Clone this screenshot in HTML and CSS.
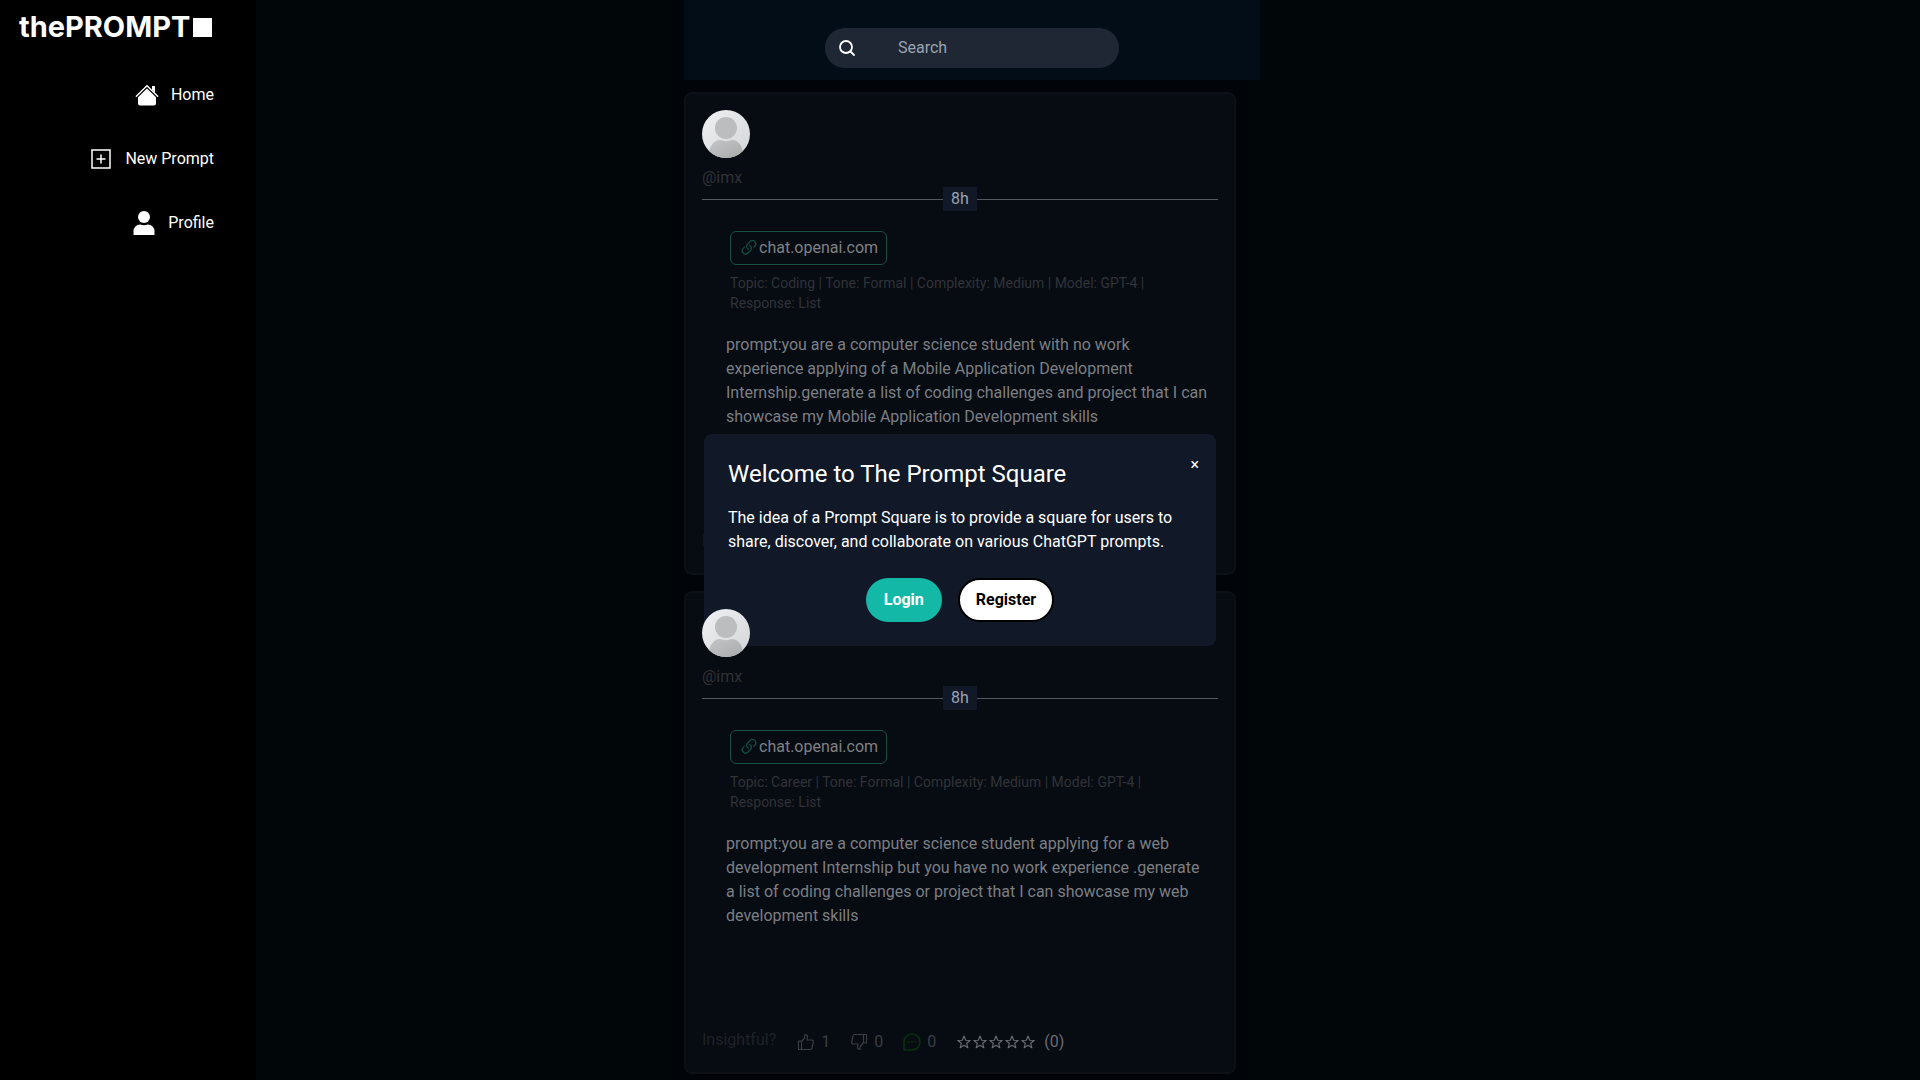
FILE: index.html
```html
<!DOCTYPE html>
<html lang="en">
<head>
    <meta charset="UTF-8">
    <meta name="viewport" content="width=device-width, initial-scale=1.0">
    <title>The Prompt Square</title>
    <link rel="stylesheet" href="styles.css">
</head>
<body>
    <!-- shared icons -->
    <svg class="sprite" aria-hidden="true">
        <defs>
            <linearGradient id="avatar-bg" x1="0" y1="0" x2="1" y2="1">
                <stop offset="0" stop-color="#f0f1f3"/>
                <stop offset="1" stop-color="#d3d5d8"/>
            </linearGradient>
            <linearGradient id="avatar-body" x1="0" y1="0" x2="1" y2="1">
                <stop offset="0" stop-color="#c4c5c7"/>
                <stop offset="1" stop-color="#a9aaac"/>
            </linearGradient>
            <clipPath id="avatar-clip"><circle cx="24" cy="24" r="24"/></clipPath>
        </defs>
        <symbol id="avatar" viewBox="0 0 48 48">
            <g clip-path="url(#avatar-clip)">
                <rect width="48" height="48" fill="url(#avatar-bg)"/>
                <circle cx="24" cy="18" r="11" fill="#bcbdbf"/>
                <path d="M7 42c1-6 5-12 11-12 4 1.500 8 1.500 12 0 6 0 10 6 11 12v6H7z" fill="url(#avatar-body)"/>
            </g>
        </symbol>
        <symbol id="link" viewBox="2 2 12 12">
            <path fill="currentColor" d="M4.715 6.542 3.343 7.914a3 3 0 1 0 4.243 4.243l1.828-1.829A3 3 0 0 0 8.586 5.500L8 6.086a1 1 0 0 0-.154.199 2 2 0 0 1 .861 3.337L6.880 11.450a2 2 0 1 1-2.830-2.830l.793-.792a4 4 0 0 1-.128-1.287z"/>
            <path fill="currentColor" d="M6.586 4.672A3 3 0 0 0 7.414 9.500l.775-.776a2 2 0 0 1-.896-3.346L9.120 3.550a2 2 0 1 1 2.830 2.830l-.793.792c.112.420.155.855.128 1.287l1.372-1.372a3 3 0 1 0-4.243-4.243z"/>
        </symbol>
        <symbol id="thumb" viewBox="0 0 18 18">
            <path d="M1.500 8h3v8.500h-3zM4.500 8.500l3-3.500.6-3.500c1.800 0 2.600 1.300 2.300 3L10 7h4.800c1 0 1.700.8 1.500 1.700l-1.200 6.200c-.2 1-.8 1.600-1.800 1.600H4.500" fill="none" stroke="currentColor" stroke-width="1.200" stroke-linejoin="round"/>
        </symbol>
        <symbol id="comment" viewBox="0 0 18 18">
            <path d="M1 17V9a8 8 0 1 1 8 8z" fill="none" stroke="currentColor" stroke-width="1.600" stroke-linejoin="round"/>
            <circle cx="5.500" cy="9" r="1" fill="currentColor"/>
            <circle cx="9" cy="9" r="1" fill="currentColor"/>
            <circle cx="12.500" cy="9" r="1" fill="currentColor"/>
        </symbol>
        <symbol id="star" viewBox="0 0 16 16">
            <path d="M8 2l1.700 4.300 4.500.2-3.500 2.800 1.200 4.500L8 11.300l-3.900 2.500 1.200-4.500-3.500-2.800 4.500-.2z" fill="none" stroke="currentColor" stroke-width="1.100" stroke-linejoin="round"/>
        </symbol>
    </svg>

    <aside class="sidebar">
        <a class="logo" href="#">thePROMPT<span class="logo-square"></span></a>
        <nav class="menu">
            <a href="#">
                <svg width="24" height="24" viewBox="0 0 24 24" fill="currentColor">
                    <path d="M12 5.500l9 8.700V20.500a2 2 0 0 1-2 2H5a2 2 0 0 1-2-2v-6.300z"/>
                    <path d="M1.300 13.200L12 2.700l10.700 10.500" fill="none" stroke="currentColor" stroke-width="1.400" stroke-linecap="round"/>
                    <path d="M17 3h3v6.500l-3-3z"/>
                </svg>
                Home
            </a>
            <a href="#">
                <svg width="24" height="24" viewBox="0 0 24 24" fill="none" stroke="currentColor" stroke-width="1.500">
                    <path d="M3 3h18v18H3zM12 7.500v9M7.500 12h9"/>
                </svg>
                New Prompt
            </a>
            <a href="#">
                <svg width="24" height="24" viewBox="0 0 24 24" fill="currentColor">
                    <circle cx="12" cy="6" r="6"/>
                    <path d="M1.500 24v-4a6.500 6.500 0 0 1 6.500-6.500c2.500 1 5.500 1 8 0a6.500 6.500 0 0 1 6.500 6.500v4z"/>
                </svg>
                Profile
            </a>
        </nav>
    </aside>

    <main class="feed">
        <header class="topbar">
            <form class="search">
                <label for="search">
                    <svg width="18" height="18" viewBox="0 0 18 18" fill="none" stroke="currentColor" stroke-width="1.800" stroke-linecap="round">
                        <circle cx="8" cy="8" r="6"/>
                        <path d="M12.500 12.500L16 16"/>
                    </svg>
                </label>
                <input type="text" id="search" placeholder="Search" aria-label="Search">
            </form>
        </header>

        <article class="card">
            <svg class="avatar"><use href="#avatar"/></svg>
            <p class="username">@imx</p>
            <div class="divider"><span>8h</span></div>
            <a class="source" href="#"><svg><use href="#link"/></svg>chat.openai.com</a>
            <p class="tags">Topic: Coding | Tone: Formal | Complexity: Medium | Model: GPT-4 | Response: List</p>
            <p class="prompt">prompt:you are a computer science student with no work experience applying of a Mobile Application Development Internship.generate a list of coding challenges and project that I can showcase my Mobile Application Development skills</p>
            <div class="actions">
                <span class="insightful">Insightful?</span>
                <button class="vote"><svg><use href="#thumb"/></svg>1</button>
                <button class="vote down"><svg><use href="#thumb"/></svg>0</button>
                <button class="vote comments"><svg><use href="#comment"/></svg>0</button>
                <div class="rating">
                    <svg><use href="#star"/></svg><svg><use href="#star"/></svg><svg><use href="#star"/></svg><svg><use href="#star"/></svg><svg><use href="#star"/></svg>
                    <span>(0)</span>
                </div>
            </div>
        </article>

        <article class="card">
            <svg class="avatar"><use href="#avatar"/></svg>
            <p class="username">@imx</p>
            <div class="divider"><span>8h</span></div>
            <a class="source" href="#"><svg><use href="#link"/></svg>chat.openai.com</a>
            <p class="tags">Topic: Career | Tone: Formal | Complexity: Medium | Model: GPT-4 | Response: List</p>
            <p class="prompt">prompt:you are a computer science student applying for a web development Internship but you have no work experience .generate a list of coding challenges or project that I can showcase my web development skills</p>
            <div class="actions">
                <span class="insightful">Insightful?</span>
                <button class="vote"><svg><use href="#thumb"/></svg>1</button>
                <button class="vote down"><svg><use href="#thumb"/></svg>0</button>
                <button class="vote comments"><svg><use href="#comment"/></svg>0</button>
                <div class="rating">
                    <svg><use href="#star"/></svg><svg><use href="#star"/></svg><svg><use href="#star"/></svg><svg><use href="#star"/></svg><svg><use href="#star"/></svg>
                    <span>(0)</span>
                </div>
            </div>
        </article>
    </main>

    <div class="modal" role="dialog" aria-labelledby="modal-title">
        <button class="close" aria-label="Close">×</button>
        <h2 id="modal-title">Welcome to The Prompt Square</h2>
        <p>The idea of a Prompt Square is to provide a square for users to share, discover, and collaborate on various ChatGPT prompts.</p>
        <div class="modal-buttons">
            <button class="login">Login</button>
            <button class="register">Register</button>
        </div>
    </div>
</body>
</html>
```
FILE: styles.css
```css
* {
    box-sizing: border-box;
}

body {
    margin: 0;
    min-height: 100vh;
    display: grid;
    grid-template-columns: 256px 1fr 256px;
    background-color: #010609;
    color: #fff;
    font-family: Roboto, sans-serif;
    font-size: 16px;
    line-height: 24px;
}

p,
h2 {
    margin: 0;
}

a {
    color: inherit;
    text-decoration: none;
}

button {
    font: inherit;
    color: inherit;
    background: none;
    border: none;
    padding: 0;
    cursor: pointer;
}

.sprite {
    position: absolute;
    width: 0;
    height: 0;
}

/* Sidebar */
.sidebar {
    background-color: #000;
    padding: 7px 42px 0 19px;
}

.logo {
    display: flex;
    align-items: center;
    gap: 3px;
    font-family: Inter, sans-serif;
    font-size: 29px;
    font-weight: 700;
    line-height: 40px;
}

.logo-square {
    width: 19px;
    height: 19px;
    background-color: #fff;
}

.menu {
    display: flex;
    flex-direction: column;
    gap: 40px;
    margin-top: 36px;
}

.menu a {
    display: flex;
    align-items: center;
    justify-content: flex-end;
    gap: 12px;
}

/* Feed */
.feed {
    width: 100%;
    max-width: 576px;
    margin: 0 auto;
    padding: 0 12px;
    background-color: #010409;
}

.topbar {
    width: calc(100% + 24px);
    height: 80px;
    margin-bottom: 12px;
    padding-top: 16px;
    display: flex;
    align-items: center;
    justify-content: center;
    background-color: #030d17;
}

.search {
    display: flex;
    align-items: center;
    width: 294px;
    height: 40px;
    padding-left: 13px;
    border-radius: 20px;
    background-color: #1f2735;
}

.search label {
    display: flex;
}

.search input {
    flex: 1;
    min-width: 0;
    margin-left: 42px;
    padding: 0;
    border: none;
    outline: none;
    background: none;
    color: #fff;
    font: inherit;
}

.search input::placeholder {
    color: #9ca3af;
}

.card {
    display: flex;
    flex-direction: column;
    align-items: flex-start;
    min-height: 483px;
    margin-bottom: 16px;
    padding: 16px;
    border: 2px solid #0c1118;
    border-radius: 8px;
    background-color: #070b12;
}

.avatar {
    position: relative;
    z-index: 20;
    width: 48px;
    height: 48px;
}

.username {
    margin-top: 8px;
    color: #303235;
}

.divider {
    display: flex;
    align-items: center;
    width: 100%;
    margin-top: -3px;
    color: #9ca3af;
}

.divider::before,
.divider::after {
    content: "";
    flex: 1;
    height: 1px;
    background-color: #535861;
}

.divider span {
    padding: 0 8px;
    background-color: #111827;
}

.source {
    display: flex;
    align-items: center;
    gap: 2px;
    margin: 20px 0 8px 28px;
    padding: 4px 8px 4px 10px;
    border: 1px solid #17513f;
    border-radius: 6px;
    color: #7f8184;
}

.source svg {
    width: 16px;
    height: 16px;
    color: #11503f;
}

.tags {
    width: 440px;
    max-width: 100%;
    margin-left: 28px;
    color: #303338;
    font-size: 14px;
    line-height: 20px;
}

.prompt {
    margin: 20px 8px 0 24px;
    color: #7c7f83;
}

.actions {
    display: flex;
    align-items: center;
    margin-top: auto;
    color: #3b3e43;
}

.insightful {
    margin: 0 21px 4px 0;
    color: #1f2227;
}

.vote {
    display: flex;
    align-items: center;
    gap: 6px;
    margin-right: 20px;
}

.vote svg {
    width: 18px;
    height: 18px;
}

.down svg {
    transform: rotate(180deg);
}

.comments svg {
    color: #06320e;
}

.rating {
    display: flex;
    align-items: center;
    color: #6b6e73;
}

.rating svg {
    width: 16px;
    height: 16px;
}

.rating span {
    margin-left: 8px;
}

/* Welcome modal */
.modal {
    position: fixed;
    top: 50%;
    left: 50%;
    z-index: 10;
    width: 512px;
    max-width: 100%;
    padding: 24px;
    transform: translate(-50%, -50%);
    border-radius: 8px;
    background-color: #111827;
}

.modal h2 {
    margin-bottom: 16px;
    font-size: 24px;
    font-weight: 400;
    line-height: 32px;
}

.close {
    position: absolute;
    top: 19px;
    right: 17px;
}

.modal-buttons {
    display: flex;
    justify-content: center;
    gap: 16px;
    margin-top: 24px;
}

.modal-buttons button {
    height: 44px;
    border-radius: 22px;
    font-weight: 700;
}

.modal-buttons .login {
    padding: 0 18px;
    background-color: #14b8a6;
}

.modal-buttons .register {
    padding: 0 16px;
    border: 2px solid #000;
    background-color: #fff;
    color: #000;
}
```
